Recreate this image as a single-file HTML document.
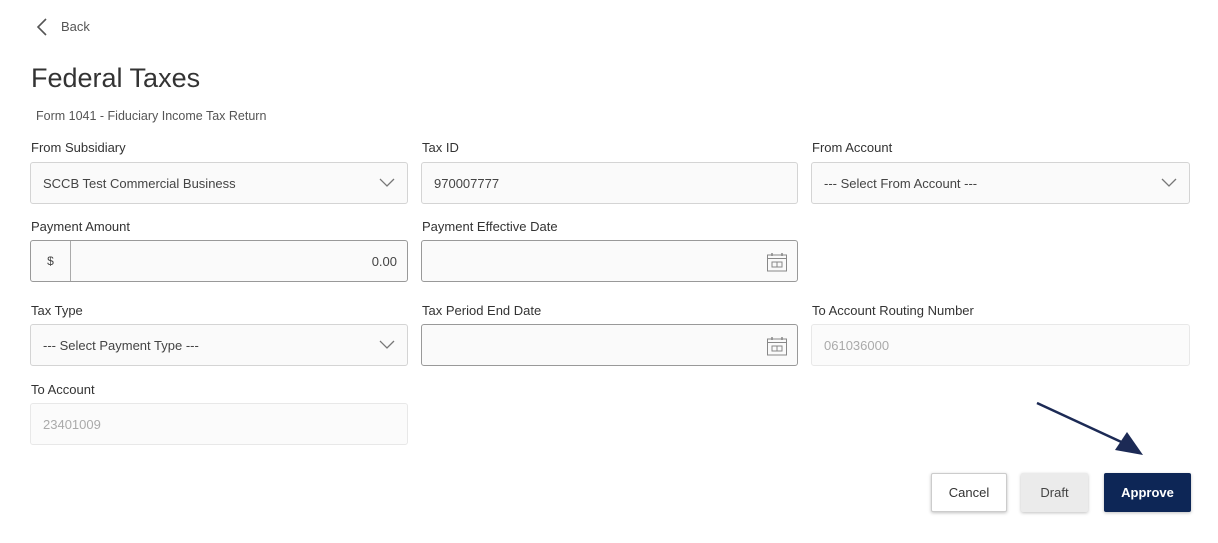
<!DOCTYPE html><html><head><style>
body{margin:0;width:1218px;height:543px;background:#fff;font-family:"Liberation Sans",sans-serif;position:relative;overflow:hidden;color:#333}
.a{position:absolute}
.lbl{position:absolute;font-size:13px;color:#333}
.in{position:absolute;box-sizing:border-box;border:1px solid #d4d4d4;border-radius:3px;background:#fafafa;font-size:13px;color:#444;padding-left:12px;display:flex;align-items:center}
.dk{border-color:#999}
.dis{background:#fbfbfb;color:#aaa;border-color:#e8e8e8}
.chev{position:absolute;right:12px;top:13px}
.cal{position:absolute;right:9px;top:10px}
.btn{position:absolute;box-sizing:border-box;font-size:13px;display:flex;align-items:center;justify-content:center;border-radius:2px;box-shadow:0 1px 3px rgba(0,0,0,.25)}
</style></head><body>
<svg class="a" style="left:34px;top:17px" width="14" height="20"><path d="M12 2 L4 10 L12 18" fill="none" stroke="#555" stroke-width="1.6"/></svg>
<div class="a" style="left:61px;top:19px;font-size:13px;color:#555">Back</div>
<div class="a" style="left:31px;top:63px;font-size:27px;color:#333">Federal Taxes</div>
<div class="a" style="left:36px;top:109px;font-size:12.5px;color:#555">Form 1041 - Fiduciary Income Tax Return</div>

<div class="lbl" style="left:31px;top:140px">From Subsidiary</div>
<div class="in" style="left:30px;top:162px;width:378px;height:42px">SCCB Test Commercial Business<svg class="chev" width="16" height="12"><path d="M1 3 L8 10 L15 3" fill="none" stroke="#777" stroke-width="1.3"/></svg></div>
<div class="lbl" style="left:422px;top:140px">Tax ID</div>
<div class="in" style="left:421px;top:162px;width:377px;height:42px">970007777</div>
<div class="lbl" style="left:812px;top:140px">From Account</div>
<div class="in" style="left:811px;top:162px;width:379px;height:42px">--- Select From Account ---<svg class="chev" width="16" height="12"><path d="M1 3 L8 10 L15 3" fill="none" stroke="#777" stroke-width="1.3"/></svg></div>

<div class="lbl" style="left:31px;top:219px">Payment Amount</div>
<div class="in dk" style="left:30px;top:240px;width:378px;height:42px;padding:0">
<div style="width:39px;height:100%;border-right:1px solid #aaa;display:flex;align-items:center;justify-content:center;font-size:12px">$</div>
<div style="flex:1;text-align:right;padding-right:10px">0.00</div></div>
<div class="lbl" style="left:422px;top:219px">Payment Effective Date</div>
<div class="in dk" style="left:421px;top:240px;width:377px;height:42px"><svg class="cal" width="22" height="22"><rect x="1.5" y="4" width="19" height="16" fill="none" stroke="#888"/><line x1="1.5" y1="7.5" x2="20.5" y2="7.5" stroke="#888"/><line x1="6" y1="2" x2="6" y2="5" stroke="#888" stroke-width="1.5"/><line x1="16" y1="2" x2="16" y2="5" stroke="#888" stroke-width="1.5"/><rect x="6" y="11" width="10" height="5" fill="none" stroke="#888"/><line x1="11" y1="11" x2="11" y2="16" stroke="#888"/></svg></div>

<div class="lbl" style="left:31px;top:303px">Tax Type</div>
<div class="in" style="left:30px;top:324px;width:378px;height:42px">--- Select Payment Type ---<svg class="chev" width="16" height="12"><path d="M1 3 L8 10 L15 3" fill="none" stroke="#777" stroke-width="1.3"/></svg></div>
<div class="lbl" style="left:422px;top:303px">Tax Period End Date</div>
<div class="in dk" style="left:421px;top:324px;width:377px;height:42px"><svg class="cal" width="22" height="22"><rect x="1.5" y="4" width="19" height="16" fill="none" stroke="#888"/><line x1="1.5" y1="7.5" x2="20.5" y2="7.5" stroke="#888"/><line x1="6" y1="2" x2="6" y2="5" stroke="#888" stroke-width="1.5"/><line x1="16" y1="2" x2="16" y2="5" stroke="#888" stroke-width="1.5"/><rect x="6" y="11" width="10" height="5" fill="none" stroke="#888"/><line x1="11" y1="11" x2="11" y2="16" stroke="#888"/></svg></div>
<div class="lbl" style="left:812px;top:303px">To Account Routing Number</div>
<div class="in dis" style="left:811px;top:324px;width:379px;height:42px">061036000</div>

<div class="lbl" style="left:31px;top:382px">To Account</div>
<div class="in dis" style="left:30px;top:403px;width:378px;height:42px">23401009</div>

<svg class="a" style="left:1030px;top:398px" width="130" height="65"><line x1="7" y1="5" x2="100" y2="48" stroke="#1c2a55" stroke-width="2.5"/><polygon points="113,57 85,52 97,34" fill="#1c2a55"/></svg>

<div class="btn" style="left:931px;top:473px;width:76px;height:39px;background:#fff;border:1px solid #ccc;color:#333">Cancel</div>
<div class="btn" style="left:1021px;top:473px;width:67px;height:39px;background:#ebebeb;color:#444">Draft</div>
<div class="btn" style="left:1104px;top:473px;width:87px;height:39px;background:#0d2656;color:#fff;font-weight:bold">Approve</div>
</body></html>
